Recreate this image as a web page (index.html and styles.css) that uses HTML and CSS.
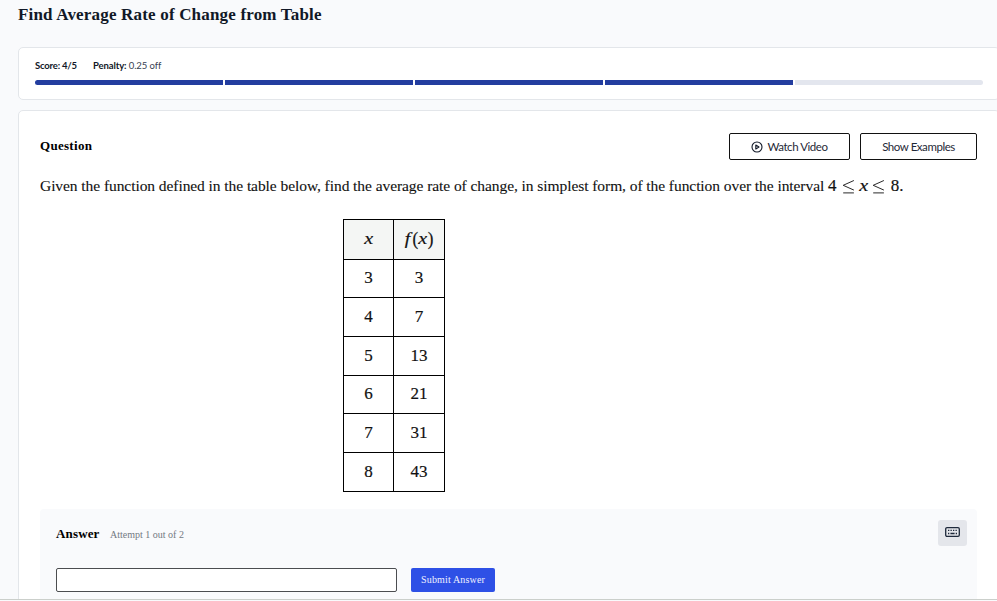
FILE: index.html
```html
<!DOCTYPE html>
<html lang="en">
<head>
<meta charset="utf-8">
<title>Find Average Rate of Change from Table</title>
<link rel="stylesheet" href="styles.css">
</head>
<body>
<main class="page">
  <h1 class="title"><span>Find Average Rate of Change from Table</span></h1>
  <section class="card progress-card">
    <div class="stats"><span class="score"><b>Score: 4/5</b></span><span class="penalty"><b>Penalty:</b> 0.25 off</span></div>
    <div class="progress"><i class="done"></i><i class="done"></i><i class="done"></i><i class="done"></i><i></i></div>
  </section>
  <section class="card question-card">
    <header class="question-head">
      <h2 class="heading question-label"><span>Question</span></h2>
      <div class="actions">
        <button class="outline video"><svg width="12" height="12" viewBox="0 0 12 12" fill="none" stroke="#111827"><circle cx="6" cy="6" r="5" stroke-width="1.1"/><path d="M4.8 4v4L8 6z" stroke-width="1.1" stroke-linejoin="round"/></svg><span>Watch Video</span></button>
        <button class="outline examples"><span>Show Examples</span></button>
      </div>
    </header>
    <p class="prompt"><span class="sentence">Given the function defined in the table below, find the average rate of change, in simplest form, of the function over the interval</span><span class="math inequality"><span>4</span><svg class="leq" width="13" height="15" viewBox="0 0 13 15" fill="none" stroke="#111" stroke-width=".9"><path d="M11.9 1.5 1.2 6.3l10.7 4.8M1.2 13.9h10.7"/></svg><i class="var">x</i><svg class="leq" width="13" height="15" viewBox="0 0 13 15" fill="none" stroke="#111" stroke-width=".9"><path d="M11.9 1.5 1.2 6.3l10.7 4.8M1.2 13.9h10.7"/></svg><span>8.</span></span></p>
    <table class="values math">
      <colgroup><col class="col-x"><col class="col-fx"></colgroup>
      <thead><tr><th><i class="var">x</i></th><th class="fx"><i class="fn">f</i><span class="paren">(</span><i class="var">x</i><span class="paren">)</span></th></tr></thead>
      <tbody>
        <tr class="short"><td>3</td><td>3</td></tr>
        <tr><td>4</td><td>7</td></tr>
        <tr><td>5</td><td>13</td></tr>
        <tr class="short"><td>6</td><td>21</td></tr>
        <tr><td>7</td><td>31</td></tr>
        <tr><td>8</td><td>43</td></tr>
      </tbody>
    </table>
    <section class="answer">
      <div class="answer-head">
        <h2 class="heading answer-label"><span>Answer</span></h2><span class="attempt">Attempt 1 out of 2</span>
        <button class="keyboard" aria-label="Keyboard"><svg width="15" height="10" viewBox="0 0 15 10" fill="none" stroke="#1e293b"><rect x=".7" y=".7" width="13.6" height="8.6" rx="1.3" stroke-width="1.3"/><path d="M3 3.4h9" stroke-width="1.3" stroke-dasharray="1.3 1.2"/><path d="M3 6.5h1.3M5.4 6.5h4.2M10.7 6.5H12" stroke-width="1.3"/></svg></button>
      </div>
      <div class="answer-row"><input class="field" type="text" aria-label="Answer"><button class="submit"><span>Submit Answer</span></button></div>
    </section>
  </section>
</main>
</body>
</html>
```
FILE: styles.css
```css
* { box-sizing: border-box; }
body { margin: 0; height: 601px; overflow: hidden; background: #f9fafc; color: #111; font-family: "Liberation Serif", serif; }
h1, h2, p { margin: 0; }
button { font: inherit; padding: 0; }
.page { height: 600px; overflow: hidden; padding-left: 18px; border-bottom: 1px solid #cbcfcb; }
.title { height: 47px; padding-top: 4px; font-size: 17px; line-height: 22px; letter-spacing: .18px; color: #111827; white-space: nowrap; }
.card { width: 982px; background: #fff; border: 1px solid #e3e6ea; border-radius: 5px; }
.progress-card { height: 53px; padding: 11px 16px 0; margin-bottom: 10px; }
.stats { display: flex; height: 14px; font: 9.5px/14px Lato, sans-serif; color: #374151; white-space: nowrap; }
.stats b { color: #111827; }
.score { width: 58px; letter-spacing: -.2px; }
.penalty { letter-spacing: -.1px; }
.progress { display: grid; grid-template-columns: repeat(5, 188px); gap: 2px; margin-top: 7px; height: 5px; border-radius: 3px; overflow: hidden; }
.progress i { background: #e3e6ee; }
.progress .done { background: #233d9f; }
.question-card { height: 520px; padding: 22px 22px 0 21px; }
.question-head { display: flex; justify-content: space-between; height: 27px; }
.heading { font-size: 13px; line-height: 26px; color: #000; white-space: nowrap; }
.question-label { letter-spacing: .3px; }
.actions { display: flex; gap: 10px; }
.outline { display: flex; align-items: center; justify-content: center; gap: 4px; height: 27px; border: 1px solid #111; border-radius: 2px; background: #fff; color: #1f2937; font: 11.5px Lato, sans-serif; letter-spacing: -.45px; white-space: nowrap; }
.video { width: 121px; }
.examples { width: 117px; }
.prompt { display: flex; height: 59px; padding-top: 15px; line-height: 22px; white-space: nowrap; }
.sentence { width: 788px; font-size: 15.5px; letter-spacing: -.068px; -webkit-text-stroke: .1px #111; }
.math { font-size: 17px; -webkit-text-stroke: .2px #111; }
.var { display: inline-block; transform: scaleX(1.18); }
.fn { display: inline-block; margin-right: 3px; transform: scaleX(1.15); }
.fx .var { margin: 0 1px; }
.paren { display: inline-block; transform: scaleY(1.12); }
.inequality { display: flex; align-items: center; height: 22px; }
.leq { margin: 1px 5.3px 0 5px; }
.values { margin-left: 303px; border-collapse: collapse; table-layout: fixed; width: 102px; }
.col-x { width: 50px; }
.col-fx { width: 51px; }
.values th, .values td { border: 1px solid #000; padding: 0 0 1px; height: 39px; text-align: center; line-height: 20px; font-weight: 400; }
.values th { height: 40px; background: #f4f6f4; }
.values .short td { height: 38px; }
.answer { width: 937px; height: 110px; margin-top: 17px; padding: 11px 10px 0 16px; background: #f9fafc; border-radius: 4px; }
.answer-head { display: flex; height: 48px; }
.answer-label { width: 54px; padding-top: 1px; letter-spacing: .15px; }
.attempt { font-size: 10px; line-height: 29px; color: #737982; white-space: nowrap; }
.keyboard { display: flex; align-items: center; justify-content: center; width: 29px; height: 26px; margin-left: auto; padding-bottom: 2px; border: 0; border-radius: 3px; background: #e4e6eb; }
.answer-row { display: flex; gap: 14px; }
.field { width: 341px; height: 24px; border: 1px solid #4b4d50; border-radius: 2px; background: #fff; }
.submit { width: 84px; height: 24px; padding-bottom: 1px; border: 0; border-radius: 2px; background: #2e50e6; color: #eef1ff; font-size: 10px; letter-spacing: .15px; white-space: nowrap; }
```
